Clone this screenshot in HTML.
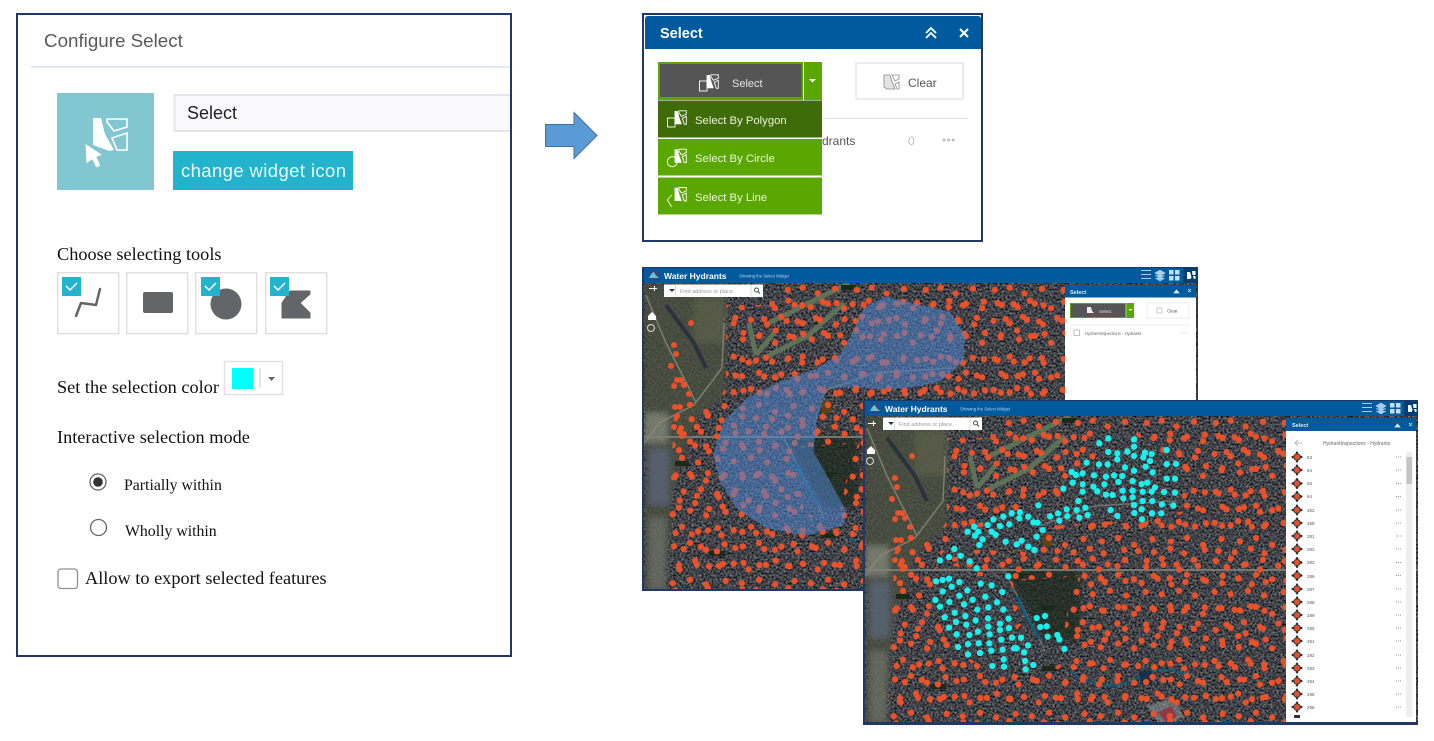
<!DOCTYPE html>
<html><head><meta charset="utf-8"><style>
html,body{margin:0;padding:0;width:1434px;height:741px;background:#fff;overflow:hidden}
svg{position:absolute;left:0;top:0}
.s{font-family:"Liberation Sans",sans-serif}
.t{font-family:"Liberation Serif",serif;fill:#111}
</style></head><body>
<svg width="1434" height="741" viewBox="0 0 1434 741" xmlns="http://www.w3.org/2000/svg">
<defs>
<clipPath id="mc"><rect width="553" height="306"/></clipPath>
<filter id="noise" x="0" y="0" width="100%" height="100%" color-interpolation-filters="sRGB"><feTurbulence type="fractalNoise" baseFrequency=".5" numOctaves="2" seed="7"/><feColorMatrix values=".8 0 0 0 -.15 .8 0 0 0 -.14 .8 0 0 0 -.12 0 0 0 0 1"/></filter>
<filter id="bl" x="-10%" y="-10%" width="120%" height="120%"><feGaussianBlur stdDeviation="3"/></filter>
<pattern id="pa" width="60" height="60" patternUnits="userSpaceOnUse" patternTransform="scale(1.15)"><path d="M5 6h0M18 4h0M31 9h0M46 5h0M11 19h0M25 21h0M40 18h0M54 22h0M4 33h0M18 35h0M33 32h0M47 36h0M10 47h0M26 49h0M40 46h0M54 52h0" stroke="#e9512a" stroke-width="5.500" stroke-linecap="round" fill="none"/></pattern>
<pattern id="pb" width="70" height="50" patternUnits="userSpaceOnUse" patternTransform="translate(4 5) scale(1.15)"><path d="M12 12h0M24 13h0M38 14h0M52 11h0M64 15h0M6 26h0M31 27h0M46 25h0M60 29h0M13 39h0M27 41h0M41 37h0M53 42h0M65 40h0" stroke="#e9512a" stroke-width="5.500" stroke-linecap="round" fill="none"/></pattern>
<mask id="m1" maskUnits="userSpaceOnUse" x="0" y="0" width="553" height="322"><rect width="553" height="322" fill="#fff"/>
<path d="M0 0H82V105L68 125L50 112L30 130L22 306H0ZM82 0H125V22H82ZM150 165L215 160L205 180L195 240L160 230Z" fill="#000"/></mask>
<mask id="m2" maskUnits="userSpaceOnUse" x="0" y="0" width="553" height="322"><rect width="553" height="322" fill="#fff"/>
<path d="M0 0H82V105L68 125L50 112L30 130L22 306H0ZM82 0H125V22H82ZM150 165L215 160L205 180L195 240L160 230Z" fill="#000"/>
<path d="M232 16H268L290 36L316 42L318 95L270 108L240 105L215 108L185 110L173 140L155 135L110 134L76 146L112 156L98 165L70 160L74 140L100 118L150 95L200 80L205 60L230 45Z" fill="#000"/>
<path d="M68 160H145L150 215L172 195L190 196L208 240L175 260L128 255L95 238L70 200Z" fill="#000"/></mask>
<g id="ground">
<rect width="553" height="322" filter="url(#noise)"/>
<g filter="url(#bl)">
<path d="M0 0H82V110L50 140L30 200L20 322H0Z" fill="#4a5040" opacity=".8"/>
<path d="M50 15H82V60H50Z" fill="#5c5f48" opacity=".7"/>
<path d="M138 152H215V225H180Z" fill="#1e2a1e" opacity=".7"/>
<path d="M0 130H24V160H0Z" fill="#9a9a8e" opacity=".55"/>
<path d="M5 165H25V222H5Z" fill="#5a6478" opacity=".8"/>
<path d="M5 235H22V306H5Z" fill="#80827c" opacity=".5"/>
</g>
<path d="M2 12L22 60L45 105L52 120M0 160L15 140L50 122L78 85L80 40" stroke="#8d8a76" stroke-width="1.500" fill="none" opacity=".8"/>
<path d="M22 22L50 60L62 85" stroke="#26303c" stroke-width="4" fill="none" opacity=".9"/>
<path d="M105 40L112 72M112 72L130 50M125 40L175 15L205 0M120 75L165 52L200 20" stroke="#62775a" stroke-width="5" fill="none" opacity=".9"/>
<path d="M0 154H553" stroke="#7d8179" stroke-width="1.800"/>
<path d="M140 155L160 195L180 235M175 110L230 90L310 85" stroke="#7d8179" stroke-width="1.300" fill="none" opacity=".8"/>
<path d="M152 180L162 202L175 223" stroke="#0c5e80" stroke-width="2.500" fill="none"/>
<path d="M205 255Q240 280 272 262Q290 248 320 258" stroke="#0c5e80" stroke-width="1.600" fill="none"/>
<path d="M275 255h12v14h-12Z" fill="#18304a"/>
<path d="M282 290l25-8l12 18l-22 12Z" fill="#9aa0a0" opacity=".5"/>
<path d="M293 296l13-6l6 10l-11 7Z" fill="#8c3a48"/>
<g fill="#1b2a18"><rect x="31" y="178" width="14" height="5"/><rect x="146" y="157" width="13" height="5"/><rect x="176" y="189" width="13" height="5"/><rect x="177" y="250" width="15" height="5"/><rect x="65" y="268" width="16" height="5"/><rect x="197" y="2" width="15" height="5"/></g>
<rect x="178" y="118" width="9" height="12" fill="#5d4311"/>
</g>
<rect id="dotsA" width="553" height="322" fill="url(#pa)"/>
<rect id="dotsB" width="553" height="322" fill="url(#pb)"/>
<path id="extra" d="M47 40h0M30 62h0M32 71h0M27 83h0M33 97h0M37 97h0M40 102h0M30 103h0M45 111h0M31 124h0M36 124h0M33 133h0M30 144h0M37 145h0M38 153h0" stroke="#e9512a" stroke-width="6" stroke-linecap="round" fill="none"/>
<g id="searchbar">
<rect x="0" y="0" width="99" height="12.500" fill="#fff"/><path d="M5 4.500h6l-3 3z" fill="#333"/><path d="M11.500 0v12.500M87 0v12.500" stroke="#ccc" stroke-width=".7"/>
<text x="16" y="8.500" class="s" font-size="5.500" fill="#999">Find address or place</text>
<circle cx="92.500" cy="5.500" r="2" fill="none" stroke="#444" stroke-width=".9"/><path d="M94 7l2 2" stroke="#444"/>
</g>
<g id="tb">
<path d="M0 0H553V15H0Z" fill="#005a9e"/>
<circle cx="10" cy="7.500" r="5.500" fill="#36457f"/><path d="M5 10q3-6 5-6q1 3 5 6z" fill="#66c3d3"/>
<text x="20" y="11" class="s" font-size="8.500" font-weight="bold" fill="#fff">Water Hydrants</text>
<text x="95" y="9.500" class="s" font-size="4.200" fill="#b8d8ef">Showing the Select Widget</text>
<path d="M497 2.500h10M497 6.500h10M497 10.500h10" stroke="#a9cde6" stroke-width="1"/>
<path d="M516 2l5 3-5 3-5-3zM511 7.500l5 3 5-3M511 10l5 3 5-3" fill="#a9cde6" stroke="#a9cde6" stroke-width=".7"/>
<path d="M525 2h4.500v4.500H525zM531 2h4.500v4.500H531zM525 8h4.500v4.500H525zM531 8h4.500v4.500H531z" fill="#c5dff1"/>
<rect x="539" y="0" width="14" height="15" fill="#003e73"/>
<path d="M543 4h3l1.500 5-1 2h-3.500zM548 3h3.500v4h-3zM549 8h2.500v3h-1.500z" fill="#fff"/>
</g>
<g id="sel"><path d="M7.300 1.700H10.500L12 8L14.500 15H7.300Z" fill="#fff"/><path d="M11.500 1.500H19V5L14 7L11.500 3ZM15 9L19 7V15H17Z" fill="none" stroke="#fff" stroke-width=".9"/></g>
<g id="row"><g transform="scale(.72)"><path d="M-2-6h4v2h2v2h2v4h-2v2h-2v2h-4v-2h-2v-2h-2v-4h2v-2h2z" fill="#333"/><circle r="3.800" fill="#e9512a"/><path d="M-1.200-7.500h2.400v2h-2.400zM-1.200 5.500h2.400v2h-2.400zM-7.500-1.200h2v2.400h-2zM5.500-1.200h2v2.400h-2z" fill="#222"/></g></g>
</defs>

<!-- LEFT PANEL -->
<rect x="17" y="14" width="494" height="642" fill="#fff" stroke="#1f3864" stroke-width="2"/>
<text x="44" y="47" class="s" font-size="18.800" fill="#5a5a5a">Configure Select</text>
<path d="M31 67H510" stroke="#d9e6ec" stroke-width="1.500"/>
<rect x="57" y="93" width="97" height="97" fill="#81c6d0"/>
<g fill="#fff"><path d="M93 118H101L105 134L114 150L109 151L93 145Z"/><path d="M85 143L103 155L97 157L101 166L96 168L92 160L86 164Z" stroke="#81c6d0" stroke-width="1"/></g>
<path d="M107 119H127V127L114 131L107 122ZM112 138L127 133V150H117Z" fill="none" stroke="#fff" stroke-width="1.600"/>
<path d="M510 95H174.500V131H510" fill="#f9f9fb" stroke="#e3e5ea" stroke-width="2"/>
<text x="187" y="119" class="s" font-size="18" fill="#222">Select</text>
<rect x="173" y="151" width="180" height="39" fill="#23b3cc"/>
<text x="181" y="177" class="s" font-size="18.500" fill="#e8fbff" textLength="165">change widget icon</text>
<text x="57" y="260" class="t" font-size="18.300">Choose selecting tools</text>
<g fill="#fff" stroke="#e0e0e0" stroke-width="1.500"><rect x="57.700" y="272.700" width="61" height="61"/><rect x="126.700" y="272.700" width="61" height="61"/><rect x="195.700" y="272.700" width="61" height="61"/><rect x="265.700" y="272.700" width="61" height="61"/></g>
<path d="M76 316L81 303L96 305L100 289" fill="none" stroke="#636568" stroke-width="2.500" stroke-linecap="round" stroke-linejoin="round"/>
<rect x="143" y="292" width="30" height="21" rx="2" fill="#636568"/>
<circle cx="226" cy="304" r="15.500" fill="#636568"/>
<path d="M290 291H310V294L300 303L310 313V318H282V303Z" fill="#636568" stroke="#636568" stroke-linejoin="round"/>
<g fill="#23b3cc"><rect x="62" y="277" width="19" height="19"/><rect x="201" y="277" width="19" height="19"/><rect x="270" y="277" width="19" height="19"/></g>
<g fill="none" stroke="#fff" stroke-width="1.500"><path d="M66 286L70 290L77 283"/><path d="M205 286L209 290L216 283"/><path d="M274 286L278 290L285 283"/></g>
<text x="57" y="393" class="t" font-size="18.300">Set the selection color</text>
<rect x="224.500" y="361.500" width="58" height="33" fill="#fff" stroke="#e2e2e2" stroke-width="1.500"/>
<rect x="232" y="368" width="21" height="21" fill="#00ffff"/>
<path d="M260 368V388" stroke="#ccc"/><path d="M268 377h7l-3.500 4z" fill="#666"/>
<text x="57" y="443" class="t" font-size="18.300">Interactive selection mode</text>
<circle cx="98" cy="482" r="8" fill="#fff" stroke="#666" stroke-width="1.300"/><circle cx="98" cy="482" r="4.800" fill="#333"/>
<text x="124" y="490" class="t" font-size="15.800">Partially within</text>
<circle cx="98.500" cy="527.500" r="8" fill="#fff" stroke="#666" stroke-width="1.300"/>
<text x="125" y="536" class="t" font-size="15.800">Wholly within</text>
<rect x="58" y="569" width="19.500" height="19.500" rx="3" fill="#fff" stroke="#909090" stroke-width="1.300"/>
<text x="85" y="584" class="t" font-size="18.300">Allow to export selected features</text>

<!-- ARROW -->
<path d="M545.500 124.500H574V112.500L597 135.500L574 158.500V146.500H545.500Z" fill="#5b9bd5" stroke="#41719c"/>

<!-- SELECT WIDGET -->
<rect x="643" y="14" width="339" height="227" fill="#fff" stroke="#1f3864" stroke-width="2"/>
<path d="M645 49V19q0-3 3-3H978q3 0 3 3V49Z" fill="#005a9e"/>
<text x="660" y="38" class="s" font-size="14.500" font-weight="bold" fill="#fff">Select</text>
<path d="M926 33L931 28L936 33M926 38L931 33L936 38" fill="none" stroke="#fff" stroke-width="1.800"/>
<path d="M960 29L968 37M968 29L960 37" stroke="#fff" stroke-width="2"/>
<rect x="658" y="62" width="164" height="38" fill="#59a700"/>
<rect x="660" y="64" width="141.500" height="33" fill="#555"/>
<path d="M803.500 62V100" stroke="#fff"/>
<path d="M809 79h7l-3.500 3.500z" fill="#fff"/>
<use href="#sel" x="699.300" y="73.300"/>
<rect x="699.500" y="81" width="7.500" height="10" fill="none" stroke="#fff" stroke-width=".9"/>
<text x="732" y="87" class="s" font-size="11" fill="#e6e6e6">Select</text>
<rect x="856" y="63" width="107" height="36" fill="#fff" stroke="#e5e5e5" stroke-width="1.500"/>
<path d="M884 75H890L892 82L895 89H887L884 87Z" fill="#e4e4e4" stroke="#888" stroke-width=".8"/><path d="M892 75H899V79L895 81ZM895 84L899 82V89H897Z" fill="none" stroke="#888" stroke-width=".8"/>
<text x="908" y="87" class="s" font-size="12" fill="#555">Clear</text>
<path d="M822 118.500H967" stroke="#ddd"/>
<text x="822" y="145" class="s" font-size="12" fill="#555">drants</text>
<text x="908" y="145" class="s" font-size="12" fill="#bbb">0</text>
<path d="M944 140h0M948.500 140h0M953 140h0" stroke="#bbb" stroke-width="3" stroke-linecap="round"/>
<rect x="658" y="100.500" width="164" height="37" fill="#3f6b08"/>
<rect x="658" y="139" width="164" height="36.500" fill="#59a700"/>
<rect x="658" y="177.500" width="164" height="37" fill="#59a700"/>
<use href="#sel" x="667.300" y="109.300"/><use href="#sel" x="667.300" y="147.700"/><use href="#sel" x="667.300" y="186"/>
<g fill="none" stroke="#fff" stroke-width=".9"><rect x="667.500" y="118" width="7.500" height="9"/><circle cx="672.300" cy="161.700" r="5"/><path d="M671.700 195L667.300 200L671.700 206.700"/></g>
<g class="s" font-size="11.300" fill="#eaf6dc"><text x="695" y="124">Select By Polygon</text><text x="695" y="162">Select By Circle</text><text x="695" y="201">Select By Line</text></g>

<!-- MAP 1 -->
<rect x="642" y="267" width="556" height="324" fill="#1f3864"/>
<g transform="translate(644 283)" clip-path="url(#mc)">
<use href="#ground"/>
<g mask="url(#m1)"><use href="#dotsA"/><use href="#dotsB"/></g>
<use href="#extra"/>
</g>
<g transform="translate(640 265) scale(.33333)"><path d="M735 95L820 115L930 140L975 210L970 290L900 350L800 370L700 372L640 365L560 370L530 470L520 560L560 630L620 740L610 780L500 812L380 790L290 730L240 650L220 570L250 470L320 400L420 350L530 310L600 270L640 200L670 130Z" fill="#4f85cf" opacity=".55"/></g>
<use href="#searchbar" x="664" y="284.500"/>
<g fill="#fff"><path d="M649 288h5v-2h1v2h2v1h-2v2h-1v-2h-5z"/><path d="M648 316l4-4 4 4v4h-8z"/></g>
<circle cx="651" cy="328" r="3.500" fill="none" stroke="#ddd"/>
<use href="#tb" x="644" y="268"/>
<rect x="1065" y="285" width="131" height="118" fill="#fff"/>
<rect x="1065" y="285" width="131" height="12.500" fill="#005a9e"/>
<text x="1070" y="294" class="s" font-size="5.500" font-weight="bold" fill="#e8f2fa">Select</text>
<path d="M1174 293l2.500-3 2.500 3zM1188 289l3 3M1191 289l-3 3" fill="#ddeaf4" stroke="#ddeaf4" stroke-width=".8"/>
<rect x="1070" y="303" width="64" height="15" fill="#59a700"/><rect x="1071" y="304" width="54.500" height="13" fill="#555"/>
<path d="M1128.500 309h4l-2 2z" fill="#fff"/><path d="M1126 303v15" stroke="#fff" stroke-width=".5"/>
<path d="M1087 307h4l1 4 2 2h-7z" fill="#eee"/>
<text x="1099" y="313" class="s" font-size="4.500" fill="#ddd">Select</text>
<rect x="1147" y="303" width="42" height="15" fill="#fff" stroke="#eee"/>
<text x="1167" y="312.500" class="s" font-size="4.500" fill="#555">Clear</text><rect x="1157" y="308" width="5" height="5" fill="none" stroke="#aaa" stroke-width=".6"/>
<path d="M1070 325H1190" stroke="#eee"/>
<rect x="1074" y="330" width="5.500" height="5.500" fill="none" stroke="#aaa" stroke-width=".7"/>
<text x="1085" y="335" class="s" font-size="4.200" fill="#666">HydrantInspections - Hydrants</text>
<path d="M1181 333h7" stroke="#bbb" stroke-dasharray="1 1.500"/>

<!-- MAP 2 -->
<rect x="863" y="400" width="555" height="325" fill="#1f3864"/>
<g transform="translate(865 416)" clip-path="url(#mc)">
<use href="#ground"/>
<g mask="url(#m2)"><use href="#dotsA"/><use href="#dotsB"/></g>
<use href="#extra"/>
</g>
<g transform="translate(860 400) scale(.33333)">
<path fill="none" stroke="#19f0ee" stroke-width="19" stroke-linecap="round" d="M718 130h0M745 115h0M822 118h0M822 140h0M745 156h0M772 160h0M802 155h0M855 158h0M875 162h0M850 172h0M772 178h0M822 168h0M920 150h0M680 188h0M717 193h0M743 193h0M795 202h0M857 200h0M870 183h0M920 192h0M948 192h0M635 216h0M648 225h0M668 220h0M702 226h0M738 230h0M762 226h0M787 228h0M822 212h0M878 217h0M920 236h0M945 236h0M638 248h0M668 253h0M610 266h0M700 260h0M733 253h0M775 246h0M818 243h0M845 252h0M862 248h0M668 275h0M712 274h0M738 284h0M758 285h0M788 272h0M790 295h0M818 272h0M848 275h0M875 275h0M885 262h0M912 276h0M945 278h0M655 303h0M818 292h0M848 303h0M877 303h0M906 313h0M940 316h0M620 328h0M650 330h0M676 323h0M752 330h0M822 315h0M845 328h0M823 339h0M876 340h0M904 340h0M846 358h0M772 348h0M683 345h0M658 353h0M622 349h0M594 340h0M570 349h0M598 362h0M535 316h0M480 337h0M505 350h0M478 355h0M455 340h0M430 350h0M400 358h0M383 375h0M448 373h0M420 378h0M520 367h0M533 368h0M343 380h0M355 395h0M323 395h0M345 407h0M395 395h0M407 404h0M368 418h0M358 435h0M437 425h0M470 433h0M485 422h0M505 440h0M523 450h0M530 410h0M548 390h0M283 447h0M302 467h0M267 471h0M240 481h0M329 484h0M350 505h0M445 529h0M228 544h0M248 540h0M267 536h0M298 546h0M275 560h0M362 551h0M395 556h0M248 574h0M322 571h0M427 576h0M298 587h0M376 590h0M338 599h0M226 600h0M268 606h0M411 607h0M240 620h0M312 613h0M352 629h0M385 622h0M430 629h0M284 638h0M254 652h0M316 648h0M288 666h0M347 661h0M384 655h0M446 656h0M420 671h0M319 674h0M267 683h0M385 680h0M420 690h0M447 684h0M354 695h0M328 705h0M290 703h0M389 703h0M456 713h0M483 713h0M424 719h0M324 732h0M294 741h0M356 730h0M388 730h0M504 736h0M428 749h0M462 745h0M470 745h0M394 752h0M360 759h0M324 763h0M492 757h0M431 778h0M495 783h0M520 795h0M397 798h0M432 800h0M497 808h0M530 654h0M555 648h0M541 681h0M560 679h0M563 710h0M592 705h0M598 718h0M613 747h0"/>
</g>
<use href="#searchbar" x="883" y="417.500"/>
<g fill="#fff"><path d="M868 423h5v-2h1v2h2v1h-2v2h-1v-2h-5z"/><path d="M867 450l4-4 4 4v4h-8z"/></g>
<circle cx="870" cy="461" r="3.500" fill="none" stroke="#ddd"/>
<use href="#tb" x="865" y="401"/>
<rect x="1286" y="418" width="130" height="304" fill="#fff"/>
<rect x="1286" y="418" width="130" height="13" fill="#005a9e"/>
<text x="1292" y="427" class="s" font-size="5.500" font-weight="bold" fill="#e8f2fa">Select</text>
<path d="M1395 427l2.500-3 2.500 3zM1409 423l3 3M1412 423l-3 3" fill="#ddeaf4" stroke="#ddeaf4" stroke-width=".8"/>
<path d="M1302 443h-7M1298 440l-3 3 3 3" fill="none" stroke="#aaa" stroke-width=".8"/>
<text x="1323" y="445" class="s" font-size="5" fill="#666">HydrantInspections - Hydrants</text>
<rect x="1406" y="452" width="6.500" height="265" fill="#eee"/><rect x="1406.500" y="457" width="5.500" height="27" fill="#c4c4c4"/>
<use href="#row" x="1297" y="457"/><use href="#row" x="1297" y="470"/><use href="#row" x="1297" y="483.500"/><use href="#row" x="1297" y="496.500"/><use href="#row" x="1297" y="510"/><use href="#row" x="1297" y="523"/><use href="#row" x="1297" y="536"/><use href="#row" x="1297" y="549"/><use href="#row" x="1297" y="562.500"/><use href="#row" x="1297" y="575.500"/><use href="#row" x="1297" y="589"/><use href="#row" x="1297" y="602"/><use href="#row" x="1297" y="615"/><use href="#row" x="1297" y="628"/><use href="#row" x="1297" y="641"/><use href="#row" x="1297" y="655"/><use href="#row" x="1297" y="668"/><use href="#row" x="1297" y="681"/><use href="#row" x="1297" y="694"/><use href="#row" x="1297" y="707"/>
<rect x="1294" y="715" width="6" height="3" fill="#333"/>
<g class="s" font-size="4.500" fill="#555"><text x="1307" y="459">53</text><text x="1307" y="472">54</text><text x="1307" y="485">63</text><text x="1307" y="498">64</text><text x="1307" y="512">262</text><text x="1307" y="525">268</text><text x="1307" y="538">281</text><text x="1307" y="551">282</text><text x="1307" y="564">283</text><text x="1307" y="578">286</text><text x="1307" y="591">287</text><text x="1307" y="604">288</text><text x="1307" y="617">289</text><text x="1307" y="630">290</text><text x="1307" y="643">291</text><text x="1307" y="657">292</text><text x="1307" y="670">293</text><text x="1307" y="683">294</text><text x="1307" y="696">295</text><text x="1307" y="709">296</text></g>
<path stroke="#999" stroke-dasharray="1 1" d="M1396 457h6M1396 470h6M1396 483.500h6M1396 496.500h6M1396 510h6M1396 523h6M1396 536h6M1396 549h6M1396 562.500h6M1396 575.500h6M1396 589h6M1396 602h6M1396 615h6M1396 628h6M1396 641h6M1396 655h6M1396 668h6M1396 681h6M1396 694h6M1396 707h6"/>
</svg>
</body></html>
